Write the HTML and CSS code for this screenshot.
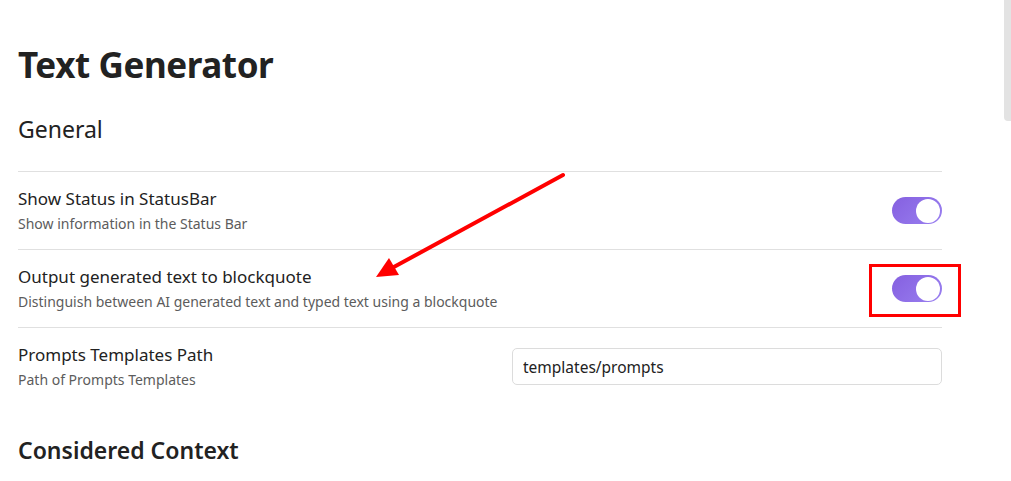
FILE: index.html
```html
<!DOCTYPE html>
<html>
<head>
<meta charset="utf-8">
<link rel="stylesheet" href="styles.css">
</head>
<body>
<div class="page">
  <h1 class="title">Text Generator</h1>
  <h3 class="section">General</h3>
  <div class="list">
    <div class="item">
      <div class="info">
        <div class="name">Show Status in StatusBar</div>
        <div class="desc">Show information in the Status Bar</div>
      </div>
      <div class="control"><div class="toggle"><div class="knob"></div></div></div>
    </div>
    <div class="item">
      <div class="info">
        <div class="name">Output generated text to blockquote</div>
        <div class="desc">Distinguish between AI generated text and typed text using a blockquote</div>
      </div>
      <div class="control"><div class="toggle"><div class="knob"></div></div></div>
    </div>
    <div class="item last">
      <div class="info">
        <div class="name">Prompts Templates Path</div>
        <div class="desc">Path of Prompts Templates</div>
      </div>
      <div class="control"><input class="text-input" type="text" value="templates/prompts"></div>
    </div>
  </div>
  <h3 class="section strong">Considered Context</h3>
</div>
<div class="highlight"></div>
<svg class="arrow" width="1011" height="481" viewBox="0 0 1011 481">
  <line x1="563" y1="175" x2="392" y2="268" stroke="#ff0000" stroke-width="4" stroke-linecap="round"/>
  <polygon points="376,277 389,258 399,275" fill="#ff0000"/>
</svg>
<div class="scroll-thumb"></div>
</body>
</html>
```
FILE: styles.css
```css
html, body {
  margin: 0;
  padding: 0;
  background: #ffffff;
}
body {
  font-family: "Noto Sans", "Open Sans", sans-serif;
  color: #222222;
  width: 1011px;
  height: 481px;
  overflow: hidden;
}
.page {
  padding: 40px 69px 0 18px;
}
.title {
  margin: 0;
  font-size: 35px;
  font-weight: 700;
  line-height: 50px;
  color: #222222;
  letter-spacing: -0.4px;
}
.section {
  margin: 23px 0 0 0;
  font-size: 23px;
  font-weight: 400;
  line-height: 32px;
  color: #222222;
}
.section.strong {
  font-weight: 600;
  margin-top: 29px;
}
.list {
  margin-top: 26px;
}
.item {
  display: flex;
  align-items: center;
  justify-content: space-between;
  border-top: 1px solid #e0e0e0;
  height: 77px;
}
.info {
  display: flex;
  flex-direction: column;
  gap: 4px;
}
.name {
  font-size: 17px;
  line-height: 22px;
  color: #222222;
}
.desc {
  font-size: 14px;
  line-height: 19px;
  color: #5c5c5c;
}
.toggle {
  width: 50px;
  height: 27px;
  border-radius: 14px;
  background: linear-gradient(135deg, #8560e0, #9a80f0);
  display: flex;
  align-items: center;
  justify-content: flex-end;
  padding-right: 2px;
  box-sizing: border-box;
}
.knob {
  width: 24px;
  height: 24px;
  border-radius: 50%;
  background: #ffffff;
}
.text-input {
  width: 430px;
  height: 37px;
  box-sizing: border-box;
  border: 1px solid #dcdcdc;
  border-radius: 5px;
  padding: 0 10px;
  font-family: "Noto Sans", "Open Sans", sans-serif;
  font-size: 15.5px;
  color: #222222;
  outline: none;
}
.highlight {
  position: absolute;
  left: 869px;
  top: 264px;
  width: 86px;
  height: 47px;
  border: 3px solid #ff0000;
}
.arrow {
  position: absolute;
  left: 0;
  top: 0;
  pointer-events: none;
}
.scroll-thumb {
  position: absolute;
  left: 1004px;
  top: 0;
  width: 7px;
  height: 121px;
  background: #e3e3e3;
  border-radius: 0 0 0 4px;
}
```
